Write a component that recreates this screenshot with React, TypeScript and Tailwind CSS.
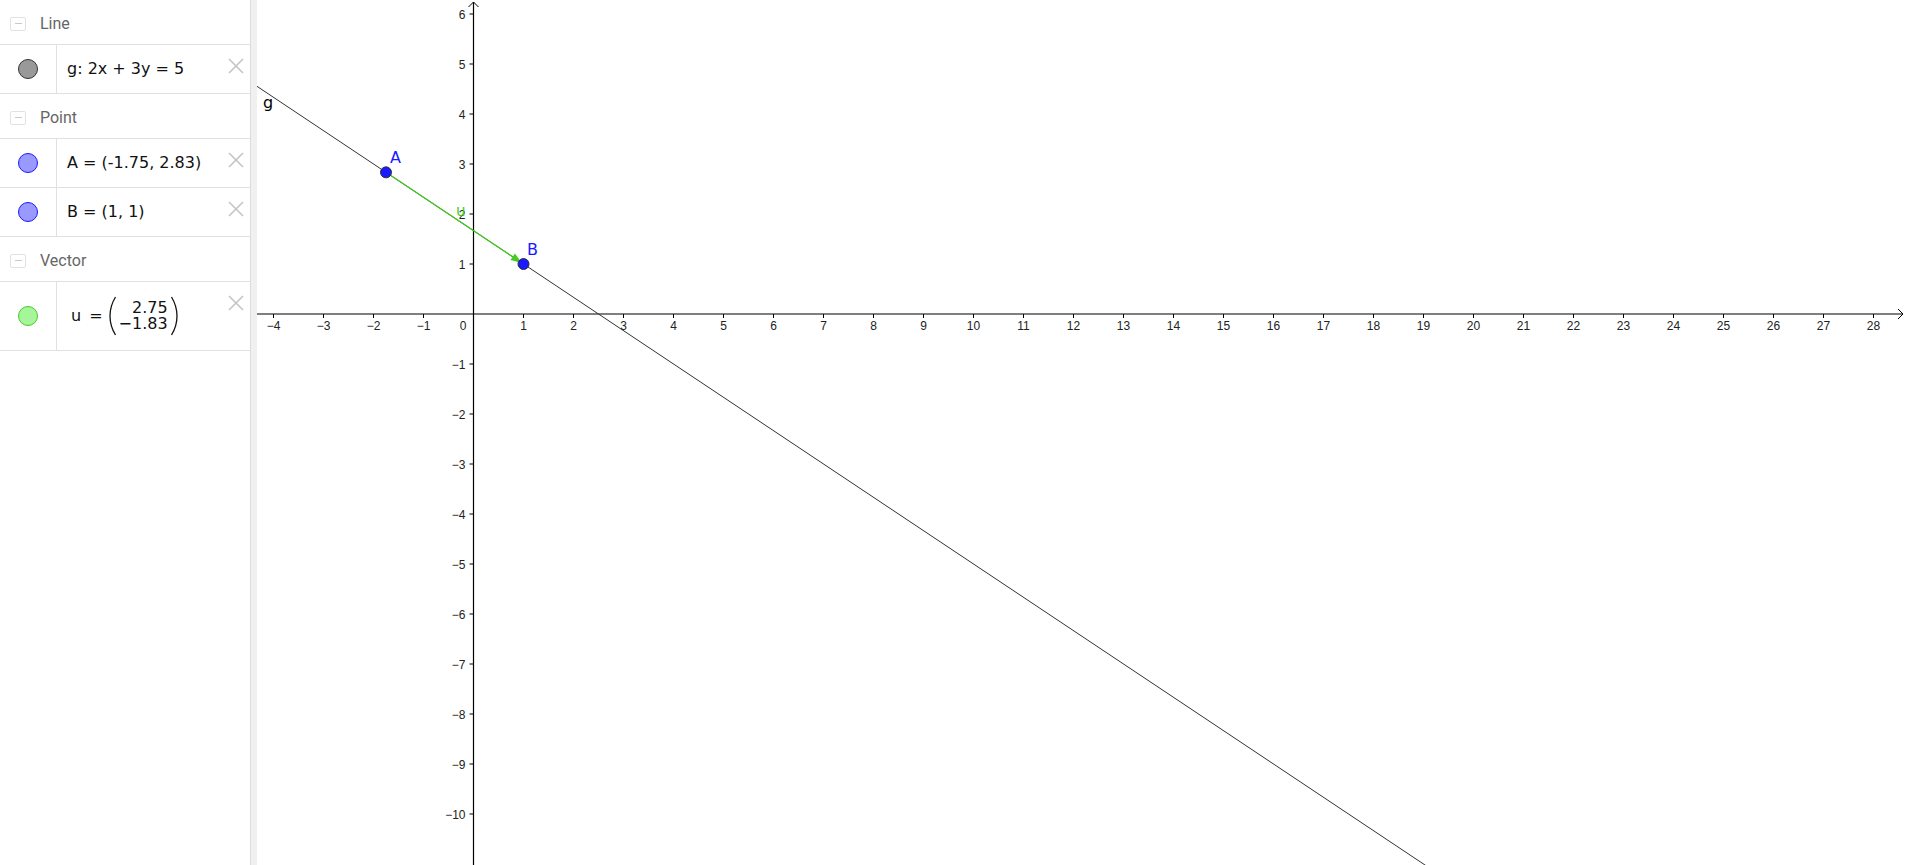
import React from "react";

const OX = 216.5;
const OY = 314;
const U = 50;

function CloseX() {
  return (
    <svg width="16" height="16" viewBox="0 0 16 16" className="absolute right-[6px] top-[13px]">
      <line x1="1" y1="1" x2="15" y2="15" stroke="#c4c4c4" strokeWidth="1.6" />
      <line x1="15" y1="1" x2="1" y2="15" stroke="#c4c4c4" strokeWidth="1.6" />
    </svg>
  );
}

function Header({ title }: { title: string }) {
  return (
    <div className="flex h-[45px] items-center border-b border-[#e0e0e0] pl-[10px] pt-[3px]">
      <div className="flex h-[14px] w-[16px] items-center justify-center rounded-[2px] border border-[#e2e2e2]">
        <div className="h-[1.5px] w-[7px] bg-[#c8c8c8]" />
      </div>
      <span className="ml-[14px] text-[16px] text-[#666666]" style={{ fontFamily: "Roboto, 'Open Sans', sans-serif" }}>
        {title}
      </span>
    </div>
  );
}

function Item({
  fill,
  stroke,
  children,
  tall,
}: {
  fill: string;
  stroke: string;
  children: React.ReactNode;
  tall?: boolean;
}) {
  return (
    <div className={`relative flex border-b border-[#e0e0e0] ${tall ? "h-[69px]" : "h-[49px]"}`}>
      <div className="flex w-[57px] items-center justify-center border-r border-[#e0e0e0]">
        <div
          className="h-[20px] w-[20px] rounded-full border"
          style={{ backgroundColor: fill, borderColor: stroke }}
        />
      </div>
      <div
        className="flex flex-1 items-center pl-[10px] text-[16px] text-[#111]"
        style={{ fontFamily: "'DejaVu Sans', 'Noto Sans', sans-serif" }}
      >
        {children}
      </div>
      <CloseX />
    </div>
  );
}

function Paren({ right }: { right?: boolean }) {
  return (
    <svg width="8" height="40" viewBox="0 0 8 40" className="shrink-0">
      {right ? (
        <path d="M1.5 1 Q7 10 7 20 Q7 30 1.5 39" fill="none" stroke="#111" strokeWidth="1.3" />
      ) : (
        <path d="M6.5 1 Q1 10 1 20 Q1 30 6.5 39" fill="none" stroke="#111" strokeWidth="1.3" />
      )}
    </svg>
  );
}

function Graph() {
  const xs: number[] = [];
  for (let i = -4; i <= 28; i++) if (i !== 0) xs.push(i);
  const ys: number[] = [];
  for (let i = 6; i >= -10; i--) if (i !== 0) ys.push(i);
  const fmt = (n: number) => (n < 0 ? "\u2212" + Math.abs(n) : String(n));
  const px = (x: number) => OX + x * U;
  const py = (y: number) => OY - y * U;
  const gy = (x: number) => (5 - 2 * x) / 3;
  const Ax = px(-1.75);
  const Ay = py(17 / 6);
  const Bx = px(1);
  const By = py(1);
  const dx = Bx - Ax;
  const dy = By - Ay;
  const len = Math.hypot(dx, dy);
  const ux = dx / len;
  const uy = dy / len;
  const tipX = Bx - ux * 2;
  const tipY = By - uy * 2;
  const baseX = tipX - ux * 11;
  const baseY = tipY - uy * 11;
  const nx = -uy;
  const ny = ux;
  const x0 = -6;
  const x1 = 24;
  return (
    <svg width="1649" height="865" className="block" style={{ fontFamily: "'Liberation Sans', Arial, sans-serif" }}>
      {/* axes */}
      <line x1="0" y1={OY} x2="1646" y2={OY} stroke="#000" strokeWidth="1.2" />
      <polyline points={`1641,${OY - 5} 1646,${OY} 1641,${OY + 5}`} fill="none" stroke="#000" strokeWidth="1" />
      <line x1={OX} y1="2" x2={OX} y2="865" stroke="#000" strokeWidth="1.2" />
      <polyline points={`${OX - 5},7 ${OX},2 ${OX + 5},7`} fill="none" stroke="#000" strokeWidth="1" />
      {xs.map((i) => (
        <g key={"x" + i}>
          <line x1={px(i)} y1={OY} x2={px(i)} y2={OY + 4} stroke="#000" strokeWidth="1" />
          <text x={px(i)} y={OY + 16} fontSize="12" textAnchor="middle" fill="#222">
            {fmt(i)}
          </text>
        </g>
      ))}
      <text x={OX - 7} y={OY + 16} fontSize="12" textAnchor="end" fill="#222">
        0
      </text>
      {ys.map((i) => (
        <g key={"y" + i}>
          <line x1={OX - 4} y1={py(i)} x2={OX} y2={py(i)} stroke="#000" strokeWidth="1" />
          <text x={OX - 8} y={py(i) + 4.5} fontSize="12" textAnchor="end" fill="#222">
            {fmt(i)}
          </text>
        </g>
      ))}
      {/* line g */}
      <line x1={px(x0)} y1={py(gy(x0))} x2={px(x1)} y2={py(gy(x1))} stroke="#333" strokeWidth="1" />
      <text x="6" y="108" fontSize="16" fill="#000" style={{ fontFamily: "'DejaVu Sans', sans-serif" }}>
        g
      </text>
      {/* vector u */}
      <line x1={Ax} y1={Ay} x2={baseX} y2={baseY} stroke="#44cc22" strokeWidth="1.3" />
      <polygon
        points={`${tipX},${tipY} ${baseX + nx * 4},${baseY + ny * 4} ${baseX - nx * 4},${baseY - ny * 4}`}
        fill="#44cc22"
      />
      <text x="199" y="216" fontSize="15" fill="#44cc22" style={{ fontFamily: "'DejaVu Sans', sans-serif" }}>
        u
      </text>
      {/* points */}
      <circle cx={Ax} cy={Ay} r="5.5" fill="#1a1aff" stroke="#333" strokeWidth="1" />
      <circle cx={Bx} cy={By} r="5.5" fill="#1a1aff" stroke="#333" strokeWidth="1" />
      <text x="133" y="163" fontSize="16" fill="#1a1aff" style={{ fontFamily: "'DejaVu Sans', sans-serif" }}>
        A
      </text>
      <text x="270" y="255" fontSize="16" fill="#1a1aff" style={{ fontFamily: "'DejaVu Sans', sans-serif" }}>
        B
      </text>
    </svg>
  );
}

export default function App() {
  return (
    <div className="flex h-[865px] w-[1906px] overflow-hidden bg-white">
      <div className="w-[251px] shrink-0 border-r border-[#dcdcdc]">
        <Header title="Line" />
        <Item fill="#999999" stroke="#333333">
          <span>g: 2x + 3y = 5</span>
        </Item>
        <Header title="Point" />
        <Item fill="#9999ff" stroke="#1a1aff">
          <span>A = (-1.75, 2.83)</span>
        </Item>
        <Item fill="#9999ff" stroke="#1a1aff">
          <span>B = (1, 1)</span>
        </Item>
        <Header title="Vector" />
        <Item fill="#a6f59a" stroke="#44cc22" tall>
          <span className="ml-[4px]">u</span>
          <span className="ml-[8px] mr-[6px]">=</span>
          <Paren />
          <div className="flex flex-col items-end px-[2px] text-[16px] leading-[16px]">
            <span>2.75</span>
            <span>{"\u2212"}1.83</span>
          </div>
          <Paren right />
        </Item>
      </div>
      <div className="w-[6px] shrink-0 bg-[#f0f0f0]" />
      <div className="flex-1 overflow-hidden">
        <Graph />
      </div>
    </div>
  );
}
